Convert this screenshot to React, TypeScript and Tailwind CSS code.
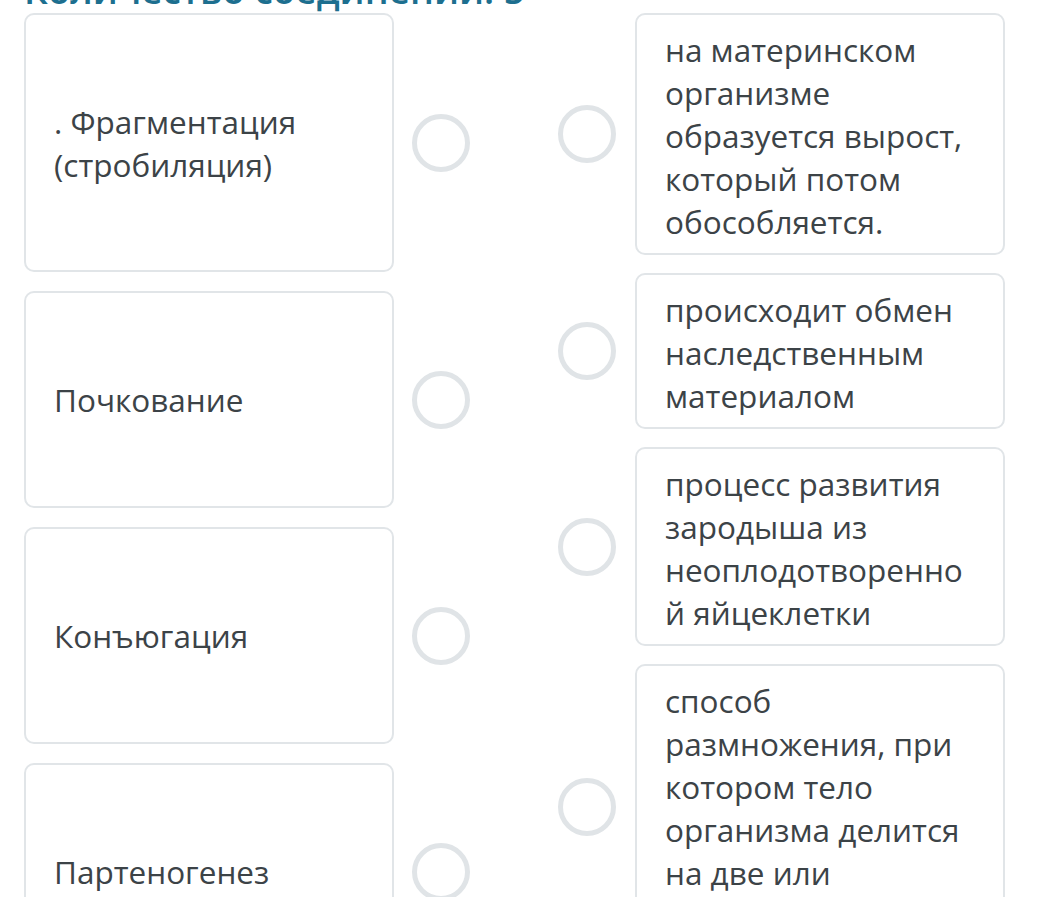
const left = [
  { text: ". Фрагментация (стробиляция)", h: "h-[259px]" },
  { text: "Почкование", h: "h-[217px]" },
  { text: "Конъюгация", h: "h-[217px]" },
  { text: "Партеногенез", h: "h-[217px]" },
];

const right = [
  "на материнском организме образуется вырост, который потом обособляется.",
  "происходит обмен наследственным материалом",
  "процесс развития зародыша из неоплодотворенной яйцеклетки",
  "способ размножения, при котором тело организма делится на две или несколько частей",
];

function Dot() {
  return <div className="h-[58px] w-[58px] shrink-0 rounded-full border-[5px] border-[#e0e4e7] bg-white" />;
}

export default function App() {
  return (
    <div
      className="h-[897px] w-[1043px] overflow-hidden bg-white text-[#3c4347]"
      style={{ fontFamily: '"Open Sans", "Noto Sans", sans-serif' }}
    >
      <h2 className="-mt-[32px] ml-[24px] h-[45px] text-[37px] leading-[44px] font-semibold whitespace-nowrap text-[#1d6f8f]">
        Количество соединений: 5
      </h2>
      <div className="flex pl-[24px]">
        <div className="flex flex-col gap-[19px]">
          {left.map((item) => (
            <div key={item.text} className="flex items-center gap-[18px]">
              <div
                className={`${item.h} flex w-[370px] items-center rounded-[10px] border-2 border-[#e1e5e8] px-[28px] text-[31.5px] leading-[43px]`}
              >
                {item.text}
              </div>
              <Dot />
            </div>
          ))}
        </div>
        <div className="ml-[88px] flex flex-col gap-[18px]">
          {right.map((text) => (
            <div key={text} className="flex items-center gap-[19px]">
              <Dot />
              <div className="w-[370px] rounded-[10px] border-2 border-[#e1e5e8] pt-[13px] pb-[10px] pl-[28px] pr-[34px] text-[31.5px] leading-[43px] break-words">
                {text}
              </div>
            </div>
          ))}
        </div>
      </div>
    </div>
  );
}
